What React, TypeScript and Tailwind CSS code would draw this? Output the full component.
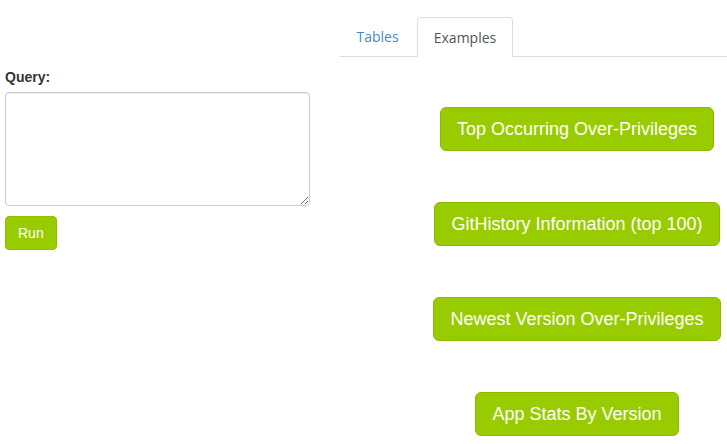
import React from "react";

const examples = [
  "Top Occurring Over-Privileges",
  "GitHistory Information (top 100)",
  "Newest Version Over-Privileges",
  "App Stats By Version",
];

export default function App() {
  return (
    <div className="w-[727px] h-[444px] bg-white flex overflow-hidden" style={{ fontFamily: '"Liberation Sans", Arial, sans-serif' }}>
      <div className="w-[340px] pl-[5px] pt-[67px] flex flex-col items-start">
        <label className="text-[14px] leading-[20px] font-bold text-[#333] mb-[5px]">Query:</label>
        <textarea className="w-[305px] h-[114px] border border-[#ccc] rounded-[4px] shadow-[inset_0_1px_1px_rgba(0,0,0,0.075)] outline-none p-[6px] text-[14px]" />
        <button className="mt-[10px] h-[34px] px-[12px] bg-[#99cc00] border border-[#8fbf00] rounded-[4px] text-white text-[14px] leading-[20px]">
          Run
        </button>
      </div>
      <div className="flex-1 pt-[17px] flex flex-col">
        <div className="flex border-b border-[#ddd] h-[40px]" style={{ fontFamily: '"Open Sans", sans-serif' }}>
          <div className="w-[75px] mr-[2px] h-[39px] flex items-center justify-center text-[14px] text-[#428bca] border border-transparent">Tables</div>
          <div className="w-[96px] h-[40px] -mb-px flex items-center justify-center text-[14px] text-[#555] bg-white border border-[#ddd] border-b-white rounded-t-[4px]">Examples</div>
        </div>
        <div className="pl-[87px] pt-[50px] flex flex-col items-center gap-[51px]">
          {examples.map((e) => (
            <button key={e} className="h-[44px] px-[16px] bg-[#99cc00] border border-[#8cba00] rounded-[6px] text-white text-[18px] leading-[24px] whitespace-nowrap">
              {e}
            </button>
          ))}
        </div>
      </div>
    </div>
  );
}
